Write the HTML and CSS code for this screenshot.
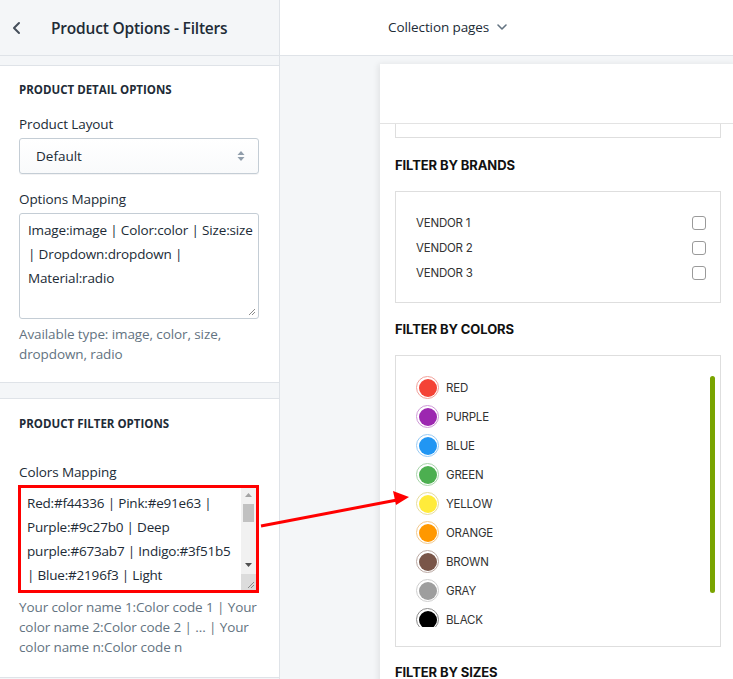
FILE: index.html
```html
<!DOCTYPE html>
<html>
<head>
<meta charset="utf-8">
<link rel="stylesheet" href="styles.css">
</head>
<body>
<div class="app">
  <aside class="sidebar">
    <header class="side-head">
      <svg class="back" width="12" height="14" viewBox="0 0 12 14"><path d="M8 2 L3 7 L8 12" fill="none" stroke="#454f5b" stroke-width="2" stroke-linecap="round" stroke-linejoin="round"/></svg>
      <h1 class="side-title">Product Options - Filters</h1>
    </header>

    <section class="card card-detail">
      <h2 class="card-title">PRODUCT DETAIL OPTIONS</h2>
      <div class="field">
        <div class="label">Product Layout</div>
        <div class="select">
          <span>Default</span>
          <svg width="8" height="12" viewBox="0 0 8 12"><path d="M4 1 L7.5 5 H0.5 Z M4 11 L7.5 7 H0.5 Z" fill="#919eab"/></svg>
        </div>
      </div>
      <div class="field field-2">
        <div class="label">Options Mapping</div>
        <div class="textarea ta-options">
          <div class="ta-line">Image:image | Color:color | Size:size</div>
          <div class="ta-line">| Dropdown:dropdown |</div>
          <div class="ta-line">Material:radio</div>
          <svg class="grip" width="10" height="10" viewBox="0 0 10 10"><path d="M9 3 L3 9 M9 6 L6 9" stroke="#8a8a8a" stroke-width="1"/></svg>
        </div>
        <p class="help">Available type: image, color, size,<br>dropdown, radio</p>
      </div>
    </section>

    <section class="card card-filter">
      <h2 class="card-title card-title-2">PRODUCT FILTER OPTIONS</h2>
      <div class="field field-3">
        <div class="label">Colors Mapping</div>
        <div class="highlight">
          <div class="textarea ta-colors">
            <div class="ta-text">
              <div class="ta-line">Red:#f44336 | Pink:#e91e63 |</div>
              <div class="ta-line">Purple:#9c27b0 | Deep</div>
              <div class="ta-line">purple:#673ab7 | Indigo:#3f51b5</div>
              <div class="ta-line">| Blue:#2196f3 | Light</div>
            </div>
            <div class="sb">
              <svg class="sb-up" width="15" height="15" viewBox="0 0 15 15"><path d="M4 9 L7.5 5 L11 9 Z" fill="#a3a3a3"/></svg>
              <div class="sb-thumb"></div>
              <div class="sb-track"></div>
              <svg class="sb-down" width="15" height="15" viewBox="0 0 15 15"><path d="M4 6 L7.5 10 L11 6 Z" fill="#505050"/></svg>
              <div class="sb-corner"><svg width="10" height="10" viewBox="0 0 10 10"><path d="M9 3 L3 9 M9 6 L6 9" stroke="#8a8a8a" stroke-width="1"/></svg></div>
            </div>
          </div>
        </div>
        <p class="help">Your color name 1:Color code 1 | Your<br>color name 2:Color code 2 | ... | Your<br>color name n:Color code n</p>
      </div>
    </section>
  </aside>

  <main class="main">
    <header class="main-head">
      <span class="page-pick">Collection pages</span>
      <svg width="12" height="8" viewBox="0 0 12 8"><path d="M2 2 L6 6 L10 2" fill="none" stroke="#637381" stroke-width="1.6" stroke-linecap="round" stroke-linejoin="round"/></svg>
    </header>
    <div class="canvas">
      <div class="preview">
        <div class="pv-top"></div>
        <div class="pv-inner">
          <div class="box box-stub"></div>

          <h3 class="pv-title pv-first">FILTER BY BRANDS</h3>
          <div class="box box-brands">
            <div class="vendor"><span>VENDOR 1</span><i class="check"></i></div>
            <div class="vendor"><span>VENDOR 2</span><i class="check"></i></div>
            <div class="vendor"><span>VENDOR 3</span><i class="check"></i></div>
          </div>

          <h3 class="pv-title">FILTER BY COLORS</h3>
          <div class="box box-colors">
            <div class="color-list">
              <div class="color"><i class="dot c-red"></i><span>RED</span></div>
              <div class="color"><i class="dot c-purple"></i><span>PURPLE</span></div>
              <div class="color"><i class="dot c-blue"></i><span>BLUE</span></div>
              <div class="color"><i class="dot c-green"></i><span>GREEN</span></div>
              <div class="color"><i class="dot c-yellow"></i><span>YELLOW</span></div>
              <div class="color"><i class="dot c-orange"></i><span>ORANGE</span></div>
              <div class="color"><i class="dot c-brown"></i><span>BROWN</span></div>
              <div class="color"><i class="dot c-gray"></i><span>GRAY</span></div>
              <div class="color"><i class="dot c-black"></i><span>BLACK</span></div>
            </div>
            <div class="green-bar"></div>
          </div>

          <h3 class="pv-title pv-sizes">FILTER BY SIZES</h3>
        </div>
      </div>
    </div>
  </main>

  <svg class="arrow" width="733" height="679" viewBox="0 0 733 679">
    <line x1="261" y1="526" x2="397" y2="500" stroke="#ff0000" stroke-width="3"/>
    <path d="M409 497 L393 491 L396 505 Z" fill="#ff0000"/>
  </svg>
</div>
</body>
</html>
```

FILE: styles.css
```css
* { box-sizing: border-box; }
html, body { margin: 0; padding: 0; }
body {
  width: 733px;
  height: 679px;
  overflow: hidden;
  background: #f4f6f8;
  font-family: "Open Sans", "Noto Sans", sans-serif;
  color: #212b36;
}
.app {
  position: relative;
  display: flex;
  width: 733px;
  height: 679px;
}

/* Sidebar */
.sidebar {
  width: 280px;
  flex: 0 0 280px;
  border-right: 1px solid #dfe3e8;
  background: #f4f6f8;
  height: 679px;
  overflow: hidden;
}
.side-head {
  height: 56px;
  display: flex;
  align-items: center;
  background: #f4f6f8;
  border-bottom: 1px solid #dfe3e8;
  padding-left: 11px;
  padding-top: 1px;
}
.back { display: block; margin-right: 28px; }
.side-title {
  margin: 0;
  font-size: 15.5px;
  font-weight: 600;
  color: #212b36;
  letter-spacing: -0.2px;
}
.card {
  background: #fff;
  border-top: 1px solid #dfe3e8;
  border-bottom: 1px solid #dfe3e8;
  padding: 16px 20px 18px 19px;
}
.card-detail { margin-top: 9px; }
.card-filter { margin-top: 15px; height: 280px; }
.card-title {
  margin: 0;
  font-size: 11.5px;
  line-height: 16px;
  font-weight: 700;
  color: #212b36;
  letter-spacing: 0;
}
.card-title-2 { margin-top: 1px; }
.field { margin-top: 16px; }
.field-2 { margin-top: 15px; }
.field-3 { margin-top: 30px; }
.label {
  font-size: 13.5px;
  line-height: 20px;
  color: #212b36;
  margin-bottom: 4px;
  letter-spacing: -0.1px;
}
.select {
  height: 36px;
  width: 240px;
  border: 1px solid #c4cdd5;
  border-radius: 3px;
  background: linear-gradient(#fff, #f9fafb);
  box-shadow: 0 1px 0 rgba(22,29,37,0.05);
  display: flex;
  align-items: center;
  justify-content: space-between;
  padding: 0 13px 0 16px;
  font-size: 13.5px;
  color: #212b36;
}
.textarea {
  position: relative;
  width: 240px;
  border: 1px solid #c4cdd5;
  border-radius: 3px;
  background: #fff;
  font-size: 13.5px;
  line-height: 24px;
  color: #212b36;
  letter-spacing: -0.15px;
}
.ta-options {
  height: 106px;
  padding: 4px 8px;
}
.ta-line { white-space: nowrap; }
.grip { position: absolute; right: 2px; bottom: 2px; }
.help {
  margin: 5px 0 0 0;
  font-size: 13.5px;
  line-height: 20px;
  color: #637381;
  letter-spacing: -0.1px;
}

.highlight {
  width: 241px;
  height: 108px;
  margin-left: -1px;
  margin-top: -1px;
  border: 3px solid #ff0000;
}
.ta-colors {
  width: 235px;
  height: 102px;
  border: 0;
  border-radius: 0;
  display: flex;
  overflow: hidden;
  letter-spacing: -0.2px;
}
.ta-text {
  flex: 1;
  padding: 3px 0 0 6px;
  overflow: hidden;
}
.sb {
  position: relative;
  width: 15px;
  flex: 0 0 15px;
  background: #f1f1f1;
  display: flex;
  flex-direction: column;
}
.sb-up, .sb-down { display: block; flex: 0 0 15px; }
.sb-thumb {
  height: 18px;
  margin: 1px 2px 0 2px;
  background: #c1c1c1;
}
.sb-track { flex: 1; }
.sb-down { margin-bottom: 2px; }
.sb-corner {
  height: 16px;
  flex: 0 0 16px;
  background: #dcdcdc;
  position: relative;
}
.sb-corner svg { position: absolute; right: 1px; bottom: 1px; }
.card-filter .help { margin-top: 4px; }

/* Main */
.main {
  flex: 1;
  min-width: 0;
  height: 679px;
  overflow: hidden;
  display: flex;
  flex-direction: column;
}
.main-head {
  height: 56px;
  flex: 0 0 56px;
  background: #fff;
  border-bottom: 1px solid #dfe3e8;
  box-shadow: 0 1px 2px rgba(0,0,0,0.04);
  display: flex;
  align-items: center;
  padding-left: 108px;
  padding-bottom: 2px;
  gap: 7px;
}
.page-pick {
  font-size: 13.5px;
  color: #212b36;
  letter-spacing: -0.1px;
}
.canvas {
  flex: 1;
  background: #f4f6f8;
  padding: 8px 0 0 100px;
  overflow: hidden;
}
.preview {
  width: 356px;
  height: 640px;
  background: #fff;
  box-shadow: -2px 0 6px rgba(0,0,0,0.08);
  font-family: "Inter", "Open Sans", sans-serif;
}
.pv-top {
  height: 60px;
  border-bottom: 1px solid #e3e3e3;
}
.pv-inner { padding: 0 15px; }
.box {
  border: 1px solid #dedede;
  background: #fff;
}
.box-stub {
  height: 14px;
  border-top: 0;
}
.pv-title {
  margin: 16px 0 16px 0;
  font-size: 13px;
  line-height: 20px;
  font-weight: 700;
  color: #111;
  letter-spacing: -0.1px;
}
.pv-first { margin-top: 17px; }
.pv-sizes { margin-top: 15px; }
.box-brands {
  height: 112px;
  padding: 18px 14px 16px 20px;
}
.vendor {
  height: 25px;
  display: flex;
  align-items: center;
  justify-content: space-between;
  font-size: 11.5px;
  color: #333;
  letter-spacing: -0.2px;
}
.check {
  display: block;
  width: 14px;
  height: 14px;
  border: 1px solid #9a9a9a;
  border-radius: 3px;
}
.box-colors {
  position: relative;
  height: 292px;
  padding: 17px 13px 0 20px;
}
.color-list {
  height: 254px;
  overflow: hidden;
}
.color {
  height: 29px;
  display: flex;
  align-items: center;
  gap: 7px;
  font-size: 11.5px;
  color: #333;
  letter-spacing: -0.2px;
}
.dot {
  display: block;
  width: 23px;
  height: 23px;
  border-radius: 50%;
  padding: 1.5px;
  background-clip: content-box;
  border: 1px solid;
}
.c-red { background-color: #f44336; border-color: #f2a19b; }
.c-purple { background-color: #9c27b0; border-color: #cf9ad8; }
.c-blue { background-color: #2196f3; border-color: #98cbf5; }
.c-green { background-color: #4caf50; border-color: #a8d4aa; }
.c-yellow { background-color: #ffeb3b; border-color: #e6dc9c; }
.c-orange { background-color: #ff9800; border-color: #f2c98c; }
.c-brown { background-color: #795548; border-color: #bba9a3; }
.c-gray { background-color: #9e9e9e; border-color: #cecece; }
.c-black { background-color: #000; border-color: #8a8a8a; }
.green-bar {
  position: absolute;
  right: 5px;
  top: 20px;
  width: 5px;
  height: 217px;
  border-radius: 3px;
  background: #7aa400;
}

.arrow {
  position: absolute;
  left: 0;
  top: 0;
  pointer-events: none;
}
```
